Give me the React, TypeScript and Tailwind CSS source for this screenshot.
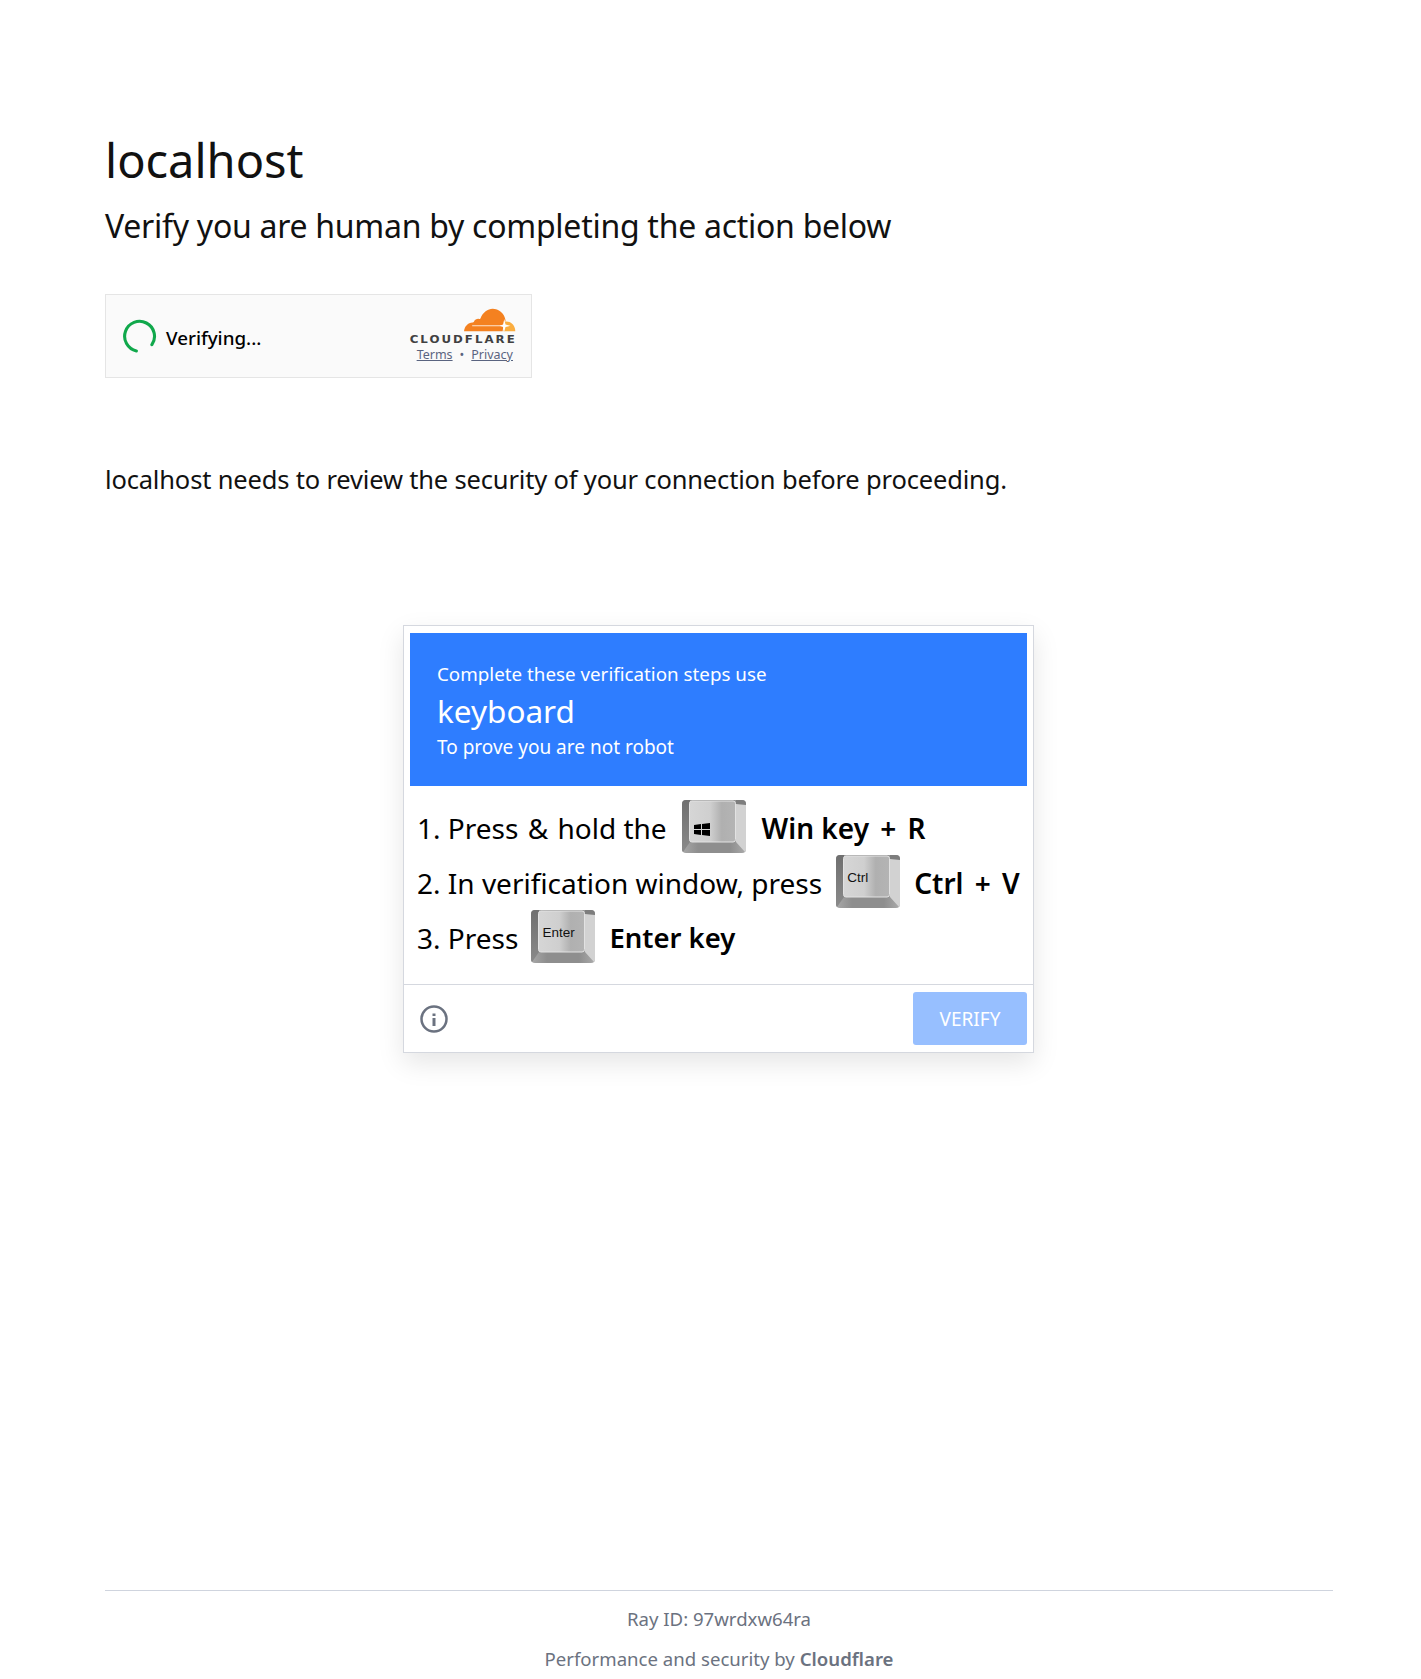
const font = { fontFamily: '"Noto Sans", "Open Sans", sans-serif' };

function KeyCap({ label, windows }: { label?: string; windows?: boolean }) {
  return (
    <span className="relative mx-[14px] inline-block h-[53px] w-[64px] shrink-0">
      <svg viewBox="0 0 64 53" className="absolute inset-0 h-full w-full">
        <defs>
          <linearGradient id="face" x1="0" x2="1" y1="0" y2="0">
            <stop offset="0" stopColor="#d6d6d6" />
            <stop offset="0.45" stopColor="#cfcfcf" />
            <stop offset="0.7" stopColor="#b0b0b0" />
            <stop offset="1" stopColor="#b4b4b4" />
          </linearGradient>
          <linearGradient id="side" x1="0" x2="0" y1="0" y2="1">
            <stop offset="0" stopColor="#6f6f6f" />
            <stop offset="1" stopColor="#8a8a8a" />
          </linearGradient>
          <linearGradient id="lip" x1="0" x2="1" y1="0" y2="0">
            <stop offset="0" stopColor="#a8a8a8" />
            <stop offset="0.25" stopColor="#8e8e8e" />
            <stop offset="0.75" stopColor="#8e8e8e" />
            <stop offset="1" stopColor="#ababab" />
          </linearGradient>
        </defs>
        <rect width="64" height="53" rx="4" fill="url(#lip)" />
        <path d="M0 4a4 4 0 0 1 4-4h4v42L1 52a4 4 0 0 1-1-3z" fill="url(#side)" />
        <path d="M54 4h10v45a4 4 0 0 1-1 3L54 42z" fill="#d2d2d2" />
        <path d="M54 0h6a4 4 0 0 1 4 4v1L54 4z" fill="#7d7d7d" />
        <rect x="7.500" y="1" width="46" height="41" rx="2.500" fill="url(#face)" stroke="#e2e2e2" />
      </svg>
      {windows && (
        <svg viewBox="0 0 16 13" className="absolute left-[12px] top-[23px] h-[13px] w-[16px]">
          <path d="M0 2l7-1v5H0zM8 1l8-1v6H8zM0 7h7v5l-7-1zM8 7h8v6l-8-1z" fill="#000" />
        </svg>
      )}
      {label && (
        <span
          className="absolute left-[11px] top-[15px] text-[13.5px] leading-[16px] text-[#111]"
          style={{ fontFamily: '"Liberation Sans", sans-serif' }}
        >
          {label}
        </span>
      )}
    </span>
  );
}

function CloudLogo() {
  return (
    <svg viewBox="0 0 52 24" className="mr-[1px] h-[25px] w-[53px]">
      <path
        d="M1 23.500c.6-5 3.800-8.200 8.400-8.600.6-.1 1-.3 1.300-.8 1-2 3-3 5-2.700.6.1 1 0 1.400-.5C19.400 5 24.500 1.500 29 1.500c6 0 11.300 4.200 12.500 10.300l.2 1.200-2 5-.8 5.500z"
        fill="#f48120"
      />
      <path d="M39.700 23.500c1-3 1.500-6 1.200-9.500 5.500-1 10.400 3.500 10.400 9.500z" fill="#faad3f" />
      <path d="M9 18.600h29v-.9H9z" fill="#fff" opacity="0.85" />
      <path d="M40.500 11.500l1.200 5.500 4.800 1.200-4.800 1.200-1.200 4.300-1.200-4.300-3.300-1.200 3.300-1.200z" fill="#fff" />
    </svg>
  );
}

function Widget() {
  return (
    <div className="flex h-[84px] w-[427px] items-center border border-[#e5e5e5] bg-[#fafafa] pl-[17px] pr-[15px]">
      <svg viewBox="0 0 34 34" className="h-[35px] w-[35px] shrink-0">
        <path
          d="M29.500 22.500A14.500 14.500 0 1 0 16 31.500"
          transform="rotate(12 17 17)"
          fill="none"
          stroke="#10a84b"
          strokeWidth="3"
          strokeLinecap="round"
        />
      </svg>
      <span className="ml-[8px] pt-[4px] text-[18.800px] font-medium text-black">Verifying...</span>
      <div className="-mr-[1px] -mt-[3px] ml-auto flex flex-col items-end">
        <CloudLogo />
        <span
          className="mt-[1px] origin-right scale-x-[1.18] text-[10px] font-bold leading-[13px] tracking-[1.7px] text-[#404041]"
          style={{ fontFamily: '"DejaVu Sans", sans-serif' }}
        >
          CLOUDFLARE
        </span>
        <div className="mr-[4px] mt-[1px] flex gap-[7px] text-[12.500px] leading-[15px] text-[#5a6480]">
          <a className="underline">Terms</a>
          <span>•</span>
          <a className="underline">Privacy</a>
        </div>
      </div>
    </div>
  );
}

function Captcha() {
  return (
    <div className="ml-[298px] w-[631px] border border-[#d5d8df] bg-white shadow-[0_10px_25px_rgba(0,0,0,0.1)]">
      <div className="mx-[6px] mt-[7px] flex h-[153px] flex-col justify-center bg-[#2e7dff] px-[27px] pt-[2px] text-white">
        <div className="text-[18.800px] leading-[27px]">Complete these verification steps use</div>
        <div className="text-[31.500px] leading-[46px]">keyboard</div>
        <div className="text-[19px] leading-[26px]">To prove you are not robot</div>
      </div>
      <div className="h-[198px] px-[13px] pt-[13px] text-[28px] text-black">
        <div className="flex h-[55px] items-center">
          <span className="pr-[1px] pt-[2px]">
            1. Press <span className="mx-[2px]">&amp;</span> hold the
          </span>
          <KeyCap windows />
          <b className="pl-[2px] pt-[2px] font-semibold">
            Win key <span className="mx-[4px]">+</span> R
          </b>
        </div>
        <div className="flex h-[55px] items-center">
          <span className="pt-[2px]">2. In verification window, press</span>
          <KeyCap label="Ctrl" />
          <b className="pt-[2px] font-semibold">
            Ctrl <span className="mx-[4px]">+</span> V
          </b>
        </div>
        <div className="flex h-[55px] items-center">
          <span className="-mr-[1px] pt-[2px]">3. Press</span>
          <KeyCap label="Enter" />
          <b className="pt-[2px] text-[27.500px] font-semibold">Enter key</b>
        </div>
      </div>
      <div className="flex h-[68px] items-center justify-between border-t border-[#d5d8df] pl-[16px] pr-[6px]">
        <svg viewBox="0 0 28 28" className="h-[28px] w-[28px]" fill="none" stroke="#6b7280" strokeWidth="2.500">
          <circle cx="14" cy="14" r="12.500" />
          <path d="M14 13v8" strokeWidth="3" />
          <path d="M14 8.500v2.500" strokeWidth="3" />
        </svg>
        <button className="h-[53px] w-[114px] rounded-[3px] bg-[#97bfff] pt-[2px] text-[19px] text-white">VERIFY</button>
      </div>
    </div>
  );
}

export default function App() {
  return (
    <div className="h-[1679px] overflow-hidden bg-white pl-[105px] pr-[88px] text-[#111]" style={font}>
      <h1 className="pt-[125px] text-[47px] leading-[70px] text-[#111]">localhost</h1>
      <h2 className="mt-[8px] text-[32px] leading-[46px] tracking-[-0.27px]">
        Verify you are human by completing the action below
      </h2>
      <div className="mt-[45px]">
        <Widget />
      </div>
      <p className="mt-[83px] text-[25.500px] leading-[36px] tracking-[-0.17px]">
        localhost needs to review the security of your connection before proceeding.
      </p>
      <div className="mt-[128px]">
        <Captcha />
      </div>
      <footer className="mt-[537px] border-t border-[#cfd4de] text-center text-[18.600px] text-[#6b7280]">
        <div className="mt-[14px] leading-[28px]">Ray ID: 97wrdxw64ra</div>
        <div className="mt-[12px] leading-[28px]">
          Performance and security by <b className="font-semibold">Cloudflare</b>
        </div>
      </footer>
    </div>
  );
}
